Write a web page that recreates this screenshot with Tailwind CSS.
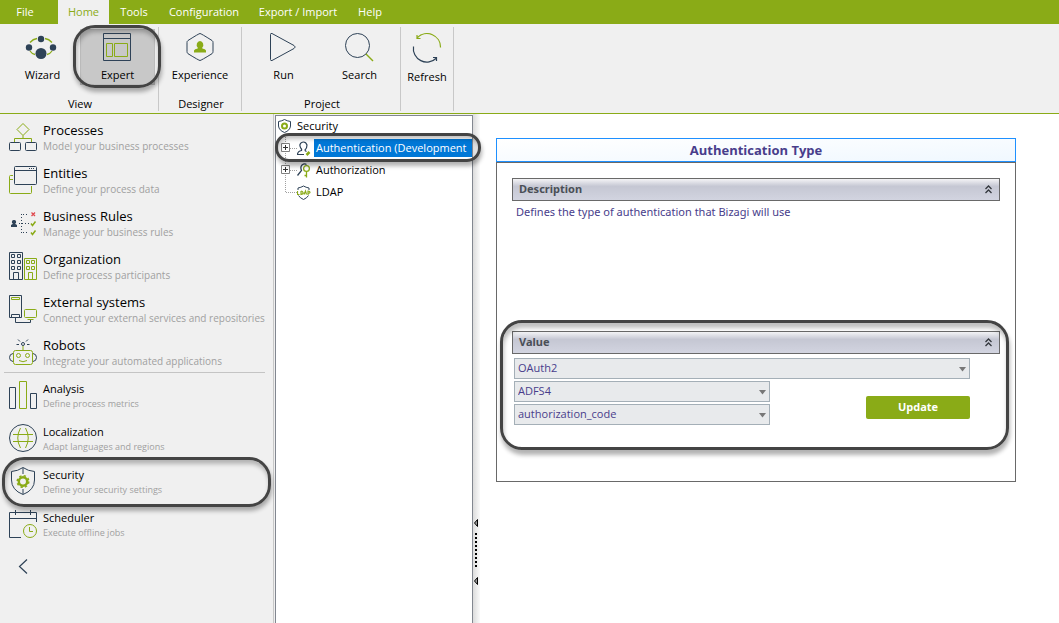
<!DOCTYPE html>
<html lang="en">
<head>
  <meta charset="UTF-8" />
  <meta name="viewport" content="width=device-width, initial-scale=1.0" />
  <title>Bizagi Studio - Security</title>
  <script src="https://cdn.jsdelivr.net/npm/@tailwindcss/browser@4"></script>
</head>
<body class="flex min-h-screen flex-col bg-[#f0f0f0] font-['Open_Sans',sans-serif] text-[11px] text-black">

  <!-- Menu tabs -->
  <nav class="flex h-6 items-stretch bg-[#8aab17] text-white">
    <button class="w-[58px] pr-2">File</button>
    <button class="w-[51px] bg-[#f0f0f0] text-[#8aab17]">Home</button>
    <button class="w-[50px]">Tools</button>
    <button class="w-[90px]">Configuration</button>
    <button class="w-[98px]">Export / Import</button>
    <button class="w-[46px]">Help</button>
  </nav>

  <!-- Ribbon -->
  <header class="flex h-[90px] border-b border-[#8aab17] pt-[3px] pb-[2px]">
    <section class="relative flex w-[159px] flex-col border-r border-[#c8c8c8]">
      <div class="flex pt-[2px]">
        <button class="ml-[5px] flex h-14 w-[75px] flex-col items-center pt-[3px]">
          <svg class="mr-[3px] size-8" viewBox="0 0 32 32" fill="#2e4257">
            <path d="M5 10.500Q8 7 12 6.500M20 6.500Q24 7 27 10.500M5 19Q7 22 10 22.500M22 22.500Q25 22 27 19" fill="none" stroke="#8aab17" stroke-width="1.300" />
            <circle cx="16" cy="7" r="3.200" /><circle cx="4" cy="15.500" r="3.200" /><circle cx="28" cy="15.500" r="3.200" /><circle cx="16" cy="21.500" r="5.500" />
          </svg>
          <span class="mt-[3px] leading-4">Wizard</span>
        </button>
        <button class="flex h-14 w-[75px] flex-col items-center border border-[#bdbdbd] bg-[#c8c8c8] pt-[2px]">
          <svg class="mr-[2px] size-8" viewBox="0 0 32 32" fill="none" stroke="#2e4257">
            <path d="M2.500 1.500H29.500V28.500H2.500ZM2.500 6.500H29.500" />
            <path d="M5.500 11.500H11.500V24.500H5.500ZM13.500 11.500H26.500V24.500H13.500Z" stroke="#8aab17" />
          </svg>
          <span class="mt-[3px] leading-4">Expert</span>
        </button>
      </div>
      <p class="mt-auto pl-[2px] text-center leading-[14px]">View</p>
      <div class="pointer-events-none absolute -top-[2px] left-[73px] h-[63px] w-[88px] rounded-[22px] border-[3px] border-[#444] shadow-[1px_4px_4px_rgba(0,0,0,0.3),inset_1px_4px_4px_rgba(0,0,0,0.25)]"></div>
    </section>

    <section class="flex w-[83px] flex-col border-r border-[#c8c8c8] pt-[2px]">
      <button class="flex h-14 flex-col items-center pt-[3px]">
        <svg class="size-8" viewBox="0 0 32 32">
          <path d="M16 1.500Q17 1.500 28 8.500Q29 9 29 10.500V19.500Q29 21 28 21.700Q17 28.500 16 28.500T4 21.700Q3 21 3 19.500V10.500Q3 9 4 8.500Q15 1.500 16 1.500Z" fill="none" stroke="#2e4257" />
          <path d="M16 9A3.500 3.800 0 0 1 18.300 15.500V16.500Q21.500 17 22 18.500V20.500H10V18.500Q10.500 17 13.700 16.500V15.500A3.500 3.800 0 0 1 16 9Z" fill="#8aab17" />
        </svg>
        <span class="mt-[3px] leading-4">Experience</span>
      </button>
      <p class="mt-auto pl-[2px] text-center leading-[14px]">Designer</p>
    </section>

    <section class="flex w-[159px] flex-col border-r border-[#c8c8c8] pt-[2px]">
      <div class="flex gap-px pl-1">
        <button class="flex h-14 w-[75px] flex-col items-center pt-[3px]">
          <svg class="mr-[2px] size-8" viewBox="0 0 32 32" fill="none" stroke="#2e4257">
            <path d="M3.500 2.500Q3.500 1 5 1.500L27 13.500Q29.500 15 27 16.500L5 28.500Q3.500 29 3.500 27.500Z" />
          </svg>
          <span class="mt-[3px] leading-4">Run</span>
        </button>
        <button class="flex h-14 w-[75px] flex-col items-center pt-[3px]">
          <svg class="size-8" viewBox="0 0 32 32" fill="none" stroke="#2e4257">
            <circle cx="13.500" cy="13.500" r="12" /><path d="M22 22L29 29" stroke="#8aab17" stroke-width="1.400" />
          </svg>
          <span class="mt-[3px] leading-4">Search</span>
        </button>
      </div>
      <p class="mt-auto pl-[2px] text-center leading-[14px]">Project</p>
    </section>

    <section class="w-[53px] border-r border-[#c8c8c8] pt-[2px]">
      <button class="flex w-full flex-col items-center pt-1">
        <svg class="size-8" viewBox="0 0 32 32" fill="none">
          <path d="M6.500 4.500A13.500 13.500 0 0 1 29.500 14.500M6 2V5.500H9.500" stroke="#8aab17" stroke-width="1.200" />
          <path d="M2.500 13.500A13.500 13.500 0 0 0 25.500 25M22 24.500H25.500V28" stroke="#2e4257" stroke-width="1.200" />
        </svg>
        <span class="mt-1 leading-4">Refresh</span>
      </button>
    </section>
  </header>

  <div class="flex flex-1">
    <!-- Module list -->
    <aside class="w-[274px] shrink-0 border-r border-[#c8c8c8]">
      <ul class="text-[13px]">
        <li class="flex h-[43px] gap-[6px] pl-[9px]">
          <svg class="mt-[9px] size-7 shrink-0" viewBox="0 0 28 28" fill="none" stroke="#2e4257">
            <path d="M14 .5L20 6.500L14 12.500L8 6.500ZM14 12.500V15.500M5.500 19V15.500H22.500V19" stroke="#8aab17" />
            <rect x=".5" y="19.500" width="11" height="8" rx="1" /><rect x="16.500" y="19.500" width="11" height="8" rx="1" />
          </svg>
          <a href="#" class="whitespace-nowrap pt-2 leading-4">Processes<span class="block text-[10px] text-[#a0a0a0]">Model your business processes</span></a>
        </li>
        <li class="flex h-[43px] gap-[6px] pl-[9px]">
          <svg class="mt-[9px] size-7 shrink-0" viewBox="0 0 28 28" fill="none" stroke="#2e4257">
            <path d="M4 9.500H1.500Q.5 9.500 .5 10.500V26.500Q.5 27.500 1.500 27.500H21.500Q22.500 27.500 22.500 26.500V20M.5 13.500H4" stroke="#8aab17" />
            <rect x="5.500" y=".5" width="22" height="18" rx="1" /><path d="M5.500 4.500H27.500M20 2.500h1M22 2.500h1M24 2.500h1" />
          </svg>
          <a href="#" class="whitespace-nowrap pt-2 leading-4">Entities<span class="block text-[10px] text-[#a0a0a0]">Define your process data</span></a>
        </li>
        <li class="flex h-[43px] gap-[6px] pl-[9px]">
          <svg class="mt-[9px] size-7 shrink-0" viewBox="0 0 28 28" fill="none">
            <path d="M12.500 5V24M14 5.500H20M10 14.500H20M14 23.500H20" stroke="#2e4257" stroke-dasharray="1 2" />
            <path d="M5 11a2 2 0 0 1 1 3.800L8 16v2H2v-2l2-1.200A2 2 0 0 1 5 11Z" fill="#2e4257" />
            <path d="M22.500 3.500L26 7M26 3.500L22.500 7" stroke="#e04a4f" stroke-width="1.300" />
            <path d="M22 14.500L23.500 16.500L26.500 12.500M22 23.500L23.500 25.500L26.500 21.500" stroke="#8aab17" stroke-width="1.500" />
          </svg>
          <a href="#" class="whitespace-nowrap pt-2 leading-4">Business Rules<span class="block text-[10px] text-[#a0a0a0]">Manage your business rules</span></a>
        </li>
        <li class="flex h-[43px] gap-[6px] pl-[9px]">
          <svg class="mt-[9px] size-7 shrink-0" viewBox="0 0 28 28" fill="none" stroke="#2e4257">
            <path d="M.5 .5H13.500V27.500H.5ZM2.500 2.500h3v3h-3zM8.500 2.500h3v3h-3zM2.500 8.500h3v3h-3zM8.500 8.500h3v3h-3zM2.500 14.500h3v3h-3zM8.500 14.500h3v3h-3zM4.500 27V20.500H9.500V27" />
            <path d="M15.500 6.500H27.500V27.500H15.500ZM17.500 8.500h3v3h-3zM22.500 8.500h3v3h-3zM17.500 14.500h3v3h-3zM22.500 14.500h3v3h-3zM19.500 27V20.500H23.500V27" stroke="#8aab17" />
          </svg>
          <a href="#" class="whitespace-nowrap pt-2 leading-4">Organization<span class="block text-[10px] text-[#a0a0a0]">Define process participants</span></a>
        </li>
        <li class="flex h-[43px] gap-[6px] pl-[9px]">
          <svg class="mt-[9px] size-7 shrink-0" viewBox="0 0 28 28" fill="none" stroke="#2e4257">
            <path d="M.5 .5H12.500V22.500H.5ZM2.500 22V19.500H10.500V22M6.500 23V27.500H21.500V25" />
            <path d="M2.500 2.500H10.500V4.500H2.500ZM18.500 24.500H24.500" stroke="#8aab17" /><rect x="15.500" y="14.500" width="12" height="8" rx="1" stroke="#8aab17" />
          </svg>
          <a href="#" class="whitespace-nowrap pt-2 leading-4">External systems<span class="block text-[10px] text-[#a0a0a0]">Connect your external services and repositories</span></a>
        </li>
        <li class="flex h-[43px] gap-[6px] pl-[9px]">
          <svg class="mt-[9px] size-7 shrink-0" viewBox="0 0 28 28" fill="none" stroke="#8aab17">
            <rect x="4.500" y="12.500" width="19" height="14" rx="2" /><circle cx="9.500" cy="17.500" r="2" /><circle cx="18.500" cy="17.500" r="2" /><path d="M10 22.500Q14 25 18 22.500M14 8V12" />
            <path d="M4 15.500Q.5 16 .5 19.500T4 23.500M24 15.500Q27.500 16 27.500 19.500T24 23.500M9 1.500L11 3.500M19 1.500L17 3.500M7.500 6.500H10M18 6.500H20.500" stroke="#2e4257" /><circle cx="14" cy="6" r="1.500" stroke="#2e4257" />
          </svg>
          <a href="#" class="whitespace-nowrap pt-2 leading-4">Robots<span class="block text-[10px] text-[#a0a0a0]">Integrate your automated applications</span></a>
        </li>
      </ul>
      <hr class="mr-2 ml-1 border-[#c4c4c4]" />
      <ul>
        <li class="flex h-[43px] gap-[6px] pl-[9px]">
          <svg class="mt-2 size-7 shrink-0" viewBox="0 0 28 28" fill="none" stroke="#2e4257">
            <path d="M.5 6.500H6.500V27.500H.5ZM21.500 12.500H27.500V27.500H21.500Z" /><path d="M10.500 .5H17.500V27.500H10.500Z" stroke="#8aab17" />
          </svg>
          <a href="#" class="whitespace-nowrap pt-2 leading-4">Analysis<span class="block text-[9px] leading-[14px] text-[#a0a0a0]">Define process metrics</span></a>
        </li>
        <li class="flex h-[43px] gap-[6px] pl-[9px]">
          <svg class="mt-2 size-7 shrink-0" viewBox="0 0 28 28" fill="none" stroke="#8aab17">
            <circle cx="14" cy="14" r="13.500" stroke="#2e4257" /><path d="M4 10.500H24M4 17.500H24M11.500 4Q6 14 11.500 24M16.500 4Q22 14 16.500 24" />
          </svg>
          <a href="#" class="whitespace-nowrap pt-2 leading-4">Localization<span class="block text-[9px] leading-[14px] text-[#a0a0a0]">Adapt languages and regions</span></a>
        </li>
        <li class="relative flex h-[43px] gap-[6px] pl-[9px]">
          <svg class="mt-2 size-7 shrink-0" viewBox="0 0 28 28" fill="none" stroke="#2e4257">
            <path d="M14 .5Q19 4 25.500 4.500V13Q25.500 23 14 27.500Q2.500 23 2.500 13V4.500Q9 4 14 .5ZM14 1V7M14 22V27" />
            <circle cx="14" cy="14.500" r="4.200" stroke="#8aab17" stroke-width="2.500" /><circle cx="14" cy="14.500" r="5.800" stroke="#8aab17" stroke-width="1.500" stroke-dasharray="2.300 2.255" />
          </svg>
          <a href="#" class="whitespace-nowrap pt-2 leading-4">Security<span class="block text-[9px] leading-[14px] text-[#a0a0a0]">Define your security settings</span></a>
          <div class="pointer-events-none absolute -top-[2px] left-[2px] h-[50px] w-[269px] rounded-[22px] border-[3px] border-[#444] shadow-[1px_4px_4px_rgba(0,0,0,0.3),inset_1px_4px_4px_rgba(0,0,0,0.25)]"></div>
        </li>
        <li class="flex h-[43px] gap-[6px] pl-[9px]">
          <svg class="mt-2 size-7 shrink-0" viewBox="0 0 28 28" fill="none" stroke="#2e4257">
            <path d="M12 27.500H.5V2.500H27.500V12M.5 8.500H27.500M6.500 0V5M21.500 0V5" /><path d="M20.500 17V21.500H24" stroke="#8aab17" /><circle cx="21" cy="21" r="6.500" stroke="#8aab17" />
          </svg>
          <a href="#" class="whitespace-nowrap pt-2 leading-4">Scheduler<span class="block text-[9px] leading-[14px] text-[#a0a0a0]">Execute offline jobs</span></a>
        </li>
      </ul>
      <button aria-label="Collapse" class="mt-[14px] ml-[18px] block">
        <svg class="h-[15px] w-[10px]" viewBox="0 0 10 15" fill="none" stroke="#2e4257" stroke-width="1.200"><path d="M9 .5L1.500 7.500L9 14.500" /></svg>
      </button>
    </aside>

    <!-- Security tree -->
    <div class="relative mt-px ml-px w-[198px] shrink-0 border border-b-0 border-[#828790] bg-white">
      <ul class="leading-[22px] whitespace-nowrap">
        <li class="flex h-[21px] items-center gap-[6px] pb-px pl-[2px]">
          <svg class="h-[14px] w-[13px]" viewBox="0 0 13 14" fill="none" stroke="#2e4257">
            <path d="M6.500 .5Q9 2 12.500 2.500V7Q12 11.500 6.500 13.500Q1 11.500 .5 7V2.500Q4 2 6.500 .5Z" /><circle cx="6.500" cy="7" r="2.500" stroke="#8aab17" stroke-width="2" />
          </svg>
          <span>Security</span>
        </li>
        <li class="flex h-[22px] items-center pl-[5px]">
          <svg class="h-[22px] w-4" viewBox="0 0 16 22" fill="none" stroke="#808080">
            <path d="M4.500 0V22M9 11.500H16" stroke="#a0a0a0" stroke-dasharray="1 1" /><path d="M.5 6.500H8.500V14.500H.5Z" fill="#fff" /><path d="M2 10.500H7M4.500 8V13" stroke="#333" />
          </svg>
          <svg class="h-[15px] w-[15px]" viewBox="0 0 15 15" fill="none" stroke="#2e4257">
            <path d="M0 13.500H7M.5 13.500Q.5 10.500 4.500 9.500Q5 8.500 4 7.500Q2.500 5 3 3.500Q4 1 6.500 1T10 4Q10 7 8 9Q8 10 9.500 10.500" stroke-width="1.200" /><path d="M9.500 14L12.500 11" stroke="#8aab17" stroke-width="2.500" />
          </svg>
          <span class="ml-[2px] h-[18px] flex-1 overflow-hidden bg-[#0078d7] pl-[2px] leading-[18px] text-white">Authentication (Development</span>
        </li>
        <li class="flex h-[22px] items-center pl-[5px]">
          <svg class="h-[22px] w-4" viewBox="0 0 16 22" fill="none" stroke="#808080">
            <path d="M4.500 0V22M9 11.500H16" stroke="#a0a0a0" stroke-dasharray="1 1" /><path d="M.5 6.500H8.500V14.500H.5Z" fill="#fff" /><path d="M2 10.500H7M4.500 8V13" stroke="#333" />
          </svg>
          <svg class="h-[15px] w-[15px]" viewBox="0 0 15 15" fill="none" stroke="#2e4257">
            <path d="M.5 12.500L4.500 7.500Q3 4 5 2Q7.500 0 9.500 1.500" stroke-width="1.300" /><path d="M9.500 8V14.500M9.500 12.500H7.500" stroke="#8aab17" stroke-width="1.300" /><circle cx="9.500" cy="5.500" r="2.900" stroke="#8aab17" stroke-width="1.300" />
          </svg>
          <span class="pl-1">Authorization</span>
        </li>
        <li class="flex h-[22px] items-center pl-[5px]">
          <svg class="h-[22px] w-4" viewBox="0 0 16 22" fill="none"><path d="M4.500 0V11.500H16" stroke="#a0a0a0" stroke-dasharray="1 1" /></svg>
          <svg class="h-[15px] w-[15px]" viewBox="0 0 15 15" fill="none" stroke="#2e4257">
            <path d="M1 5V3Q4 2.500 6.500 1Q9 2.500 12 3V5M1.500 10.500Q3 13 6.500 14.500Q10 13 11.500 10.500" />
            <path d="M.5 6V9.500H2.500M4 6V9.500Q6.500 9 6 7.500T4 6M7 9.500L8.500 6L9.500 9.500M11 10V6Q13 6 13 7.200T11 8.200" stroke="#8aab17" stroke-width="1.200" />
          </svg>
          <span class="pl-1">LDAP</span>
        </li>
      </ul>
      <div class="pointer-events-none absolute top-[17px] -left-px z-10 h-[29px] w-[206px] rounded-[14px] border-[3px] border-[#444] shadow-[1px_4px_4px_rgba(0,0,0,0.3),inset_1px_3px_4px_rgba(0,0,0,0.25)]"></div>
    </div>

    <!-- Splitter -->
    <div class="flex w-[7px] shrink-0 flex-col items-center bg-linear-to-r from-[#dcdcdc] to-[#fafafa] pt-[404px]">
      <svg class="h-[68px] w-[7px]" viewBox="0 0 7 68" fill="none" stroke="#000">
        <path d="M4.500 1.500V8.500L1.500 5ZM4.500 59.500V66.500L1.500 63Z" fill="#999" /><path d="M3 15V51" stroke-width="2" stroke-dasharray="2 2" />
      </svg>
    </div>

    <!-- Settings form -->
    <main class="flex-1 bg-white pt-6 pr-[43px] pl-4 text-[#483d8b]">
      <div class="flex min-h-[344px] flex-col border border-t-0 border-[#696969]">
        <h1 class="-mx-px h-6 border border-[#1e90ff] bg-linear-to-br from-white to-[#f0f8ff] text-center text-[13px] leading-[23px] font-bold">Authentication Type</h1>
        <div class="border-t border-[#696969] px-[15px] pt-[15px]">
          <section class="min-h-[153px]">
            <h2 class="flex h-[23px] items-center justify-between border border-[#696969] bg-linear-to-b from-[#f4f4f6] via-[#c5c7d3] via-35% to-[#d2d4e0] pr-[6px] pl-[6px] font-['Noto_Sans',sans-serif] font-bold text-[#4a4f57]">
              Description
              <button aria-label="Collapse description"><svg class="block h-[9px] w-[9px]" viewBox="0 0 9 9" fill="none" stroke="#33373d" stroke-width="1.300"><path d="M1.500 4L4.500 1L7.500 4M1.500 8L4.500 5L7.500 8" /></svg></button>
            </h2>
            <p class="pt-[3px] pl-1 font-['Noto_Sans',sans-serif] leading-4">Defines the type of authentication that Bizagi will use</p>
          </section>
          <section class="relative">
            <h2 class="flex h-[23px] items-center justify-between border border-[#696969] bg-linear-to-b from-[#f4f4f6] via-[#c5c7d3] via-35% to-[#d2d4e0] pr-[6px] pl-[6px] font-['Noto_Sans',sans-serif] font-bold text-[#4a4f57]">
              Value
              <button aria-label="Collapse value"><svg class="block h-[9px] w-[9px]" viewBox="0 0 9 9" fill="none" stroke="#33373d" stroke-width="1.300"><path d="M1.500 4L4.500 1L7.500 4M1.500 8L4.500 5L7.500 8" /></svg></button>
            </h2>
            <form class="flex flex-col gap-[2px] pt-1 pr-[30px] pl-[2px]">
              <div class="relative h-[21px]">
                <select aria-label="Authentication type" class="h-full w-full appearance-none border border-[#a4afb7] bg-[#e8eaec] px-[3px]"><option>OAuth2</option></select>
                <svg class="pointer-events-none absolute top-[9px] right-1 h-[5px] w-[7px]" viewBox="0 0 7 5" fill="#777"><path d="M0 0H7L3.500 4.500Z" /></svg>
              </div>
              <div class="flex items-center justify-between">
                <div class="flex w-64 flex-col gap-[2px]">
                  <div class="relative h-[21px]">
                    <select aria-label="Provider" class="h-full w-full appearance-none border border-[#a4afb7] bg-[#e8eaec] px-[3px]"><option>ADFS4</option></select>
                    <svg class="pointer-events-none absolute top-[9px] right-1 h-[5px] w-[7px]" viewBox="0 0 7 5" fill="#777"><path d="M0 0H7L3.500 4.500Z" /></svg>
                  </div>
                  <div class="relative h-[21px]">
                    <select aria-label="Grant type" class="h-full w-full appearance-none border border-[#a4afb7] bg-[#e8eaec] px-[3px]"><option>authorization_code</option></select>
                    <svg class="pointer-events-none absolute top-[9px] right-1 h-[5px] w-[7px]" viewBox="0 0 7 5" fill="#777"><path d="M0 0H7L3.500 4.500Z" /></svg>
                  </div>
                </div>
                <button type="button" class="mt-2 h-[23px] w-[104px] rounded-[2px] bg-[#8aab17] font-bold text-white">Update</button>
              </div>
            </form>
            <div class="pointer-events-none absolute -top-[11px] -right-[9px] -left-3 h-[130px] rounded-[22px] border-[3px] border-[#444] shadow-[1px_5px_4px_rgba(0,0,0,0.3),inset_1px_5px_4px_rgba(0,0,0,0.25)]"></div>
          </section>
        </div>
      </div>
    </main>
  </div>
</body>
</html>
